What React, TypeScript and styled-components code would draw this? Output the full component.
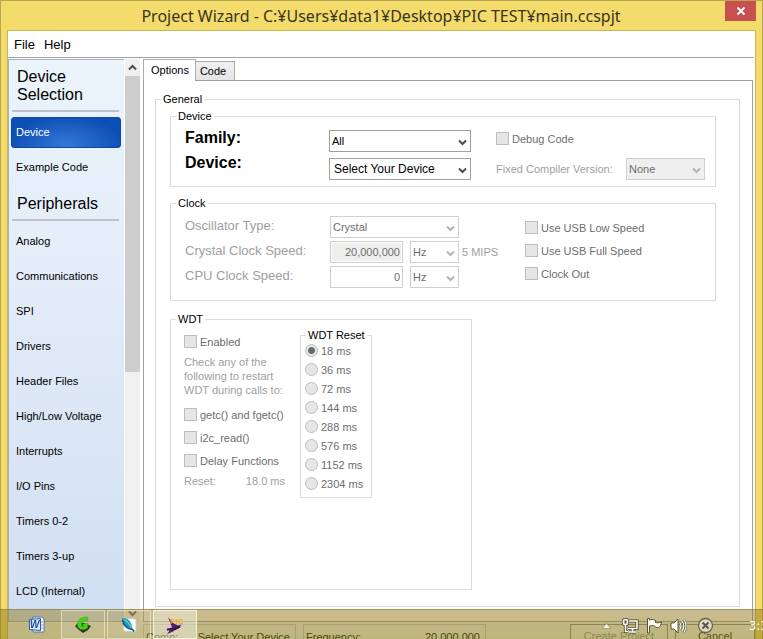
import React, { ReactNode } from "react";
import styled, { createGlobalStyle, css } from "styled-components";

const GlobalStyle = createGlobalStyle`
  *, *::before, *::after { box-sizing: border-box; }
  html, body { margin: 0; height: 100%; overflow: hidden; }
  body, button, input, select {
    font-family: "Liberation Sans", Arial, sans-serif;
    font-size: 11px;
    line-height: 14px;
    color: #000;
  }
`;

/* ---------- window frame ---------- */

const Frame = styled.div`
  display: flex;
  flex-direction: column;
  height: 100vh;
  overflow: hidden;
  padding: 0 6px;
  background: #f3db6c;
  border: 1px solid #bba64e;
  border-bottom: 0;
`;

const TitleBar = styled.header`
  display: flex;
  flex: none;
  align-items: flex-start;
  height: 29px;
`;

const Title = styled.h1`
  flex: 1;
  margin: 0;
  padding-left: 30px;
  text-align: center;
  font-family: "Noto Sans", sans-serif;
  font-size: 16px;
  font-weight: 400;
  line-height: 31px;
  color: #3a3420;
  white-space: nowrap;
`;

const CloseButton = styled.button`
  display: flex;
  align-items: center;
  justify-content: center;
  width: 31px;
  height: 20px;
  padding: 0;
  border: 0;
  background: #c75050;
`;

const Client = styled.div`
  display: flex;
  flex: none;
  flex-direction: column;
  background: #fff;
  border: 1px solid #c9b558;
`;

const MenuBar = styled.nav`
  display: flex;
  gap: 9px;
  height: 27px;
  margin-right: 1px;
  padding: 2px 0 0 6px;
  border-bottom: 1px solid #a0a0a0;
`;

const MenuItem = styled.button`
  padding: 0;
  border: 0;
  background: none;
  font-size: 13px;
`;

const Main = styled.div`
  display: grid;
  grid-template-columns: 116px 17px 1fr;
  gap: 0 1px;
  margin-top: 1px;
`;

/* ---------- sidebar ---------- */

const Sidebar = styled.nav`
  padding: 0 3px 0 2px;
  border: solid #a3b0bf;
  border-width: 1px 0 1px 1px;
  background: linear-gradient(#ebf4fb, #e3ecf8 40%, #d0dff2);
`;

const SectionHeading = styled.h2`
  margin: 0 2px 5px 1px;
  padding: 8px 0 6px 5px;
  border-bottom: 2px solid #bcc2c8;
  font-size: 16px;
  font-weight: 400;
  line-height: 18px;
`;

const NavItem = styled.button<{ $active?: boolean }>`
  display: block;
  width: 100%;
  height: 31px;
  margin-bottom: 4px;
  padding: 0 4px 1px;
  border: 1px solid transparent;
  border-radius: 3px;
  background: none;
  text-align: left;
  white-space: nowrap;
  ${(p) =>
    p.$active &&
    css`
      border-color: #0f49a0;
      background: radial-gradient(ellipse at 50% 90%, #3576d8, #0e4fb6 75%);
      color: #fff;
    `}
`;

const ScrollBar = styled.div`
  display: flex;
  flex-direction: column;
  align-items: stretch;
  margin-right: 2px;
  background: #f0f0f0;
`;

const ScrollArrow = styled.button`
  display: flex;
  align-items: center;
  justify-content: center;
  height: 17px;
  padding: 0;
  border: 0;
  background: none;
`;

const ScrollTrack = styled.div`
  flex: 1;
`;

const ScrollThumb = styled.div`
  height: 56%;
  background: #cdcdcd;
`;

/* ---------- tabs ---------- */

const TabArea = styled.div`
  display: flex;
  flex-direction: column;
  margin: 0 2px 0 0;
`;

const TabList = styled.div`
  display: flex;
  align-items: flex-end;
  height: 21px;
`;

const Tab = styled.button<{ $active?: boolean }>`
  height: ${(p) => (p.$active ? 21 : 19)}px;
  padding: ${(p) => (p.$active ? "0 6px 1px 7px" : "0 8px 0 4px")};
  border: 1px solid #acacac;
  border-bottom: 0;
  border-left-width: ${(p) => (p.$active ? 1 : 0)}px;
  background: ${(p) => (p.$active ? "#fff" : "linear-gradient(#f0f0f0, #e5e5e5)")};
`;

const TabPanel = styled.div`
  padding: 12px 12px 14px 11px;
  border: 1px solid #a0a0a0;
  border-top: 0;
  background: linear-gradient(90deg, #fff 51px, #a0a0a0 51px) top / 100% 1px no-repeat;
`;

/* ---------- form pieces ---------- */

const Group = styled.fieldset<{ $gap?: number; $width?: number }>`
  min-width: 0;
  width: ${(p) => (p.$width ? `${p.$width}px` : "auto")};
  margin: ${(p) => p.$gap ?? 0}px 0 0;
  padding: 0;
  border: 1px solid #dcdcdc;
`;

const Legend = styled.legend`
  margin-left: 5px;
  padding: 0 2px;
  line-height: 14px;
  white-space: nowrap;
`;

const GroupBody = styled.div<{ $pad: string }>`
  padding: ${(p) => p.$pad};
`;

const Row = styled.div<{ $gap?: number; $align?: string }>`
  display: flex;
  gap: ${(p) => p.$gap ?? 0}px;
  align-items: ${(p) => p.$align ?? "flex-start"};
`;

const Stack = styled.div<{ $gap?: number; $width?: number; $top?: number; $left?: number }>`
  display: flex;
  flex: none;
  flex-direction: column;
  gap: ${(p) => p.$gap ?? 0}px;
  width: ${(p) => (p.$width ? `${p.$width}px` : "auto")};
  margin: ${(p) => p.$top ?? 0}px 0 0 ${(p) => p.$left ?? 0}px;
`;

const BigLabel = styled.label`
  font-size: 16px;
  font-weight: 700;
  line-height: 25px;
`;

const ClockGrid = styled.div`
  display: grid;
  grid-template-columns: 145px 73px 56px 35px;
  grid-auto-rows: 22px;
  gap: 3px 0;
  align-items: center;
`;

const ClockLabel = styled.label`
  padding-bottom: 2px;
  font-size: 13px;
  line-height: 18px;
  color: #a0a0a0;
`;

const OscillatorCell = styled.div`
  grid-column: 2 / -1;
`;

const Dim = styled.span`
  color: #a0a0a0;
  white-space: nowrap;
`;

const MipsText = styled(Dim)`
  padding-left: 3px;
`;

const DimLabel = styled.label`
  width: 130px;
  color: #a0a0a0;
  white-space: nowrap;
`;

const DimParagraph = styled.p`
  margin: 0;
  color: #a0a0a0;
`;

const SelectBox = styled.span<{ $width: number; $left?: number }>`
  position: relative;
  display: block;
  width: ${(p) => p.$width}px;
  height: 22px;
  margin-left: ${(p) => p.$left ?? 0}px;

  svg {
    position: absolute;
    top: 9px;
    right: 4px;
    pointer-events: none;
  }
`;

const SelectControl = styled.select<{ $filled?: boolean; $large?: boolean }>`
  appearance: none;
  width: 100%;
  height: 100%;
  padding: 0 14px 1px ${(p) => (p.$large ? 4 : 2)}px;
  border: 1px solid #a0a0a0;
  border-radius: 0;
  background: #fff;
  font-size: ${(p) => (p.$large ? 12 : 11)}px;

  &:disabled {
    border-color: #cfcfcf;
    background: ${(p) => (p.$filled ? "#efefef" : "#fff")};
    color: #6d6d6d;
    opacity: 1;
  }
`;

const NumberBox = styled.input`
  width: 73px;
  height: 22px;
  padding: 0 2px;
  border: 1px solid #cfcfcf;
  border-radius: 0;
  outline: 0;
  background: #fff;
  box-shadow: inset 0 0 0 1px #fff;
  color: #6d6d6d;
  text-align: right;

  &:read-only {
    background: #efefef;
  }
`;

const CheckLabel = styled.label`
  display: flex;
  align-items: center;
  gap: 3px;
  height: 13px;
  color: #6d6d6d;
  white-space: nowrap;
`;

const CheckInput = styled.input`
  appearance: none;
  flex: none;
  width: 13px;
  height: 13px;
  margin: 0;
  border: 1px solid #bcbcbc;
  background: #e6e6e6;

  &[type="radio"] {
    border-radius: 50%;
  }
  &[type="radio"]:checked {
    background: radial-gradient(circle, #6a6a6a 3px, #e6e6e6 4px);
  }
`;

const ResetRow = styled.div`
  display: flex;
  justify-content: space-between;
  color: #a0a0a0;
`;

/* ---------- status strip ---------- */

const StatusBar = styled.footer`
  display: flex;
  gap: 7px;
  padding: 2px 0 12px 135px;
  background: #f4f4f4;
`;

const StatusCell = styled.div<{ $width: number }>`
  display: flex;
  justify-content: space-between;
  width: ${(p) => p.$width}px;
  height: 28px;
  padding: 5px 5px 0 2px;
  border: 1px solid #c8c8c8;
  white-space: nowrap;
`;

const StatusButton = styled.button<{ $first?: boolean }>`
  width: ${(p) => (p.$first ? 98 : 80)}px;
  height: 28px;
  margin-left: ${(p) => (p.$first ? "auto" : "0")};
  padding: 0 0 4px;
  border: 1px solid #8a8a8a;
  background: #f4f4f4;
  color: ${(p) => (p.$first ? "#8d8d8d" : "#222")};
`;

/* ---------- task bar ---------- */

const TaskBar = styled.div`
  position: fixed;
  right: 0;
  bottom: 0;
  left: 0;
  display: flex;
  align-items: stretch;
  justify-content: space-between;
  height: 30px;
  border-top: 1px solid rgba(120, 108, 50, 0.45);
  background: linear-gradient(rgba(150, 120, 32, 0.5), rgba(140, 126, 20, 0.53));
  overflow: hidden;
`;

const TaskButtons = styled.div`
  display: flex;
  gap: 2px;
  padding-left: 15px;
`;

const TaskButton = styled.button<{ $open?: boolean; $active?: boolean }>`
  display: flex;
  align-items: center;
  justify-content: center;
  width: 44px;
  padding: 0;
  border: 1px solid ${(p) => (p.$active ? "#f4f1dc" : p.$open ? "rgba(245, 242, 215, 0.6)" : "transparent")};
  background: ${(p) => (p.$active ? "rgba(255, 255, 255, 0.38)" : p.$open ? "rgba(255, 255, 255, 0.1)" : "none")};
`;

const Tray = styled.div`
  display: flex;
  flex: none;
  align-items: center;
  padding-top: 2px;
  margin-right: -5px;
`;

const TrayButton = styled.button<{ $width: number }>`
  display: flex;
  align-items: center;
  justify-content: center;
  width: ${(p) => p.$width}px;
  height: 20px;
  padding: 0;
  border: 0;
  background: none;
`;

const ClockText = styled.time`
  padding-left: 28px;
  font-family: "DejaVu Sans", Verdana, sans-serif;
  font-size: 12px;
  color: #fff;
`;

/* ---------- small components ---------- */

function Chevron({ dim, up }: { dim?: boolean; up?: boolean }) {
  return (
    <svg width="9" height="7" viewBox="0 0 9 7" aria-hidden="true">
      <path
        d={up ? "M1 5.5 4.5 2 8 5.5" : "M1 1.5 4.5 5 8 1.5"}
        fill="none"
        stroke={dim ? "#b4b4b4" : "#4c4c4c"}
        strokeWidth="2"
      />
    </svg>
  );
}

interface SelectProps {
  id?: string;
  label?: string;
  value: string;
  width: number;
  left?: number;
  disabled?: boolean;
  filled?: boolean;
  large?: boolean;
}

function Select({ id, label, value, width, left, disabled, filled, large }: SelectProps) {
  return (
    <SelectBox $width={width} $left={left}>
      <SelectControl
        id={id}
        aria-label={label}
        disabled={disabled}
        $filled={filled}
        $large={large}
        defaultValue={value}
      >
        <option>{value}</option>
      </SelectControl>
      <Chevron dim={disabled} />
    </SelectBox>
  );
}

function Check({ children }: { children: ReactNode }) {
  return (
    <CheckLabel>
      <CheckInput type="checkbox" disabled />
      {children}
    </CheckLabel>
  );
}

const peripherals = [
  "Analog",
  "Communications",
  "SPI",
  "Drivers",
  "Header Files",
  "High/Low Voltage",
  "Interrupts",
  "I/O Pins",
  "Timers 0-2",
  "Timers 3-up",
  "LCD (Internal)",
];

const resetTimes = ["18 ms", "36 ms", "72 ms", "144 ms", "288 ms", "576 ms", "1152 ms", "2304 ms"];

function DeviceGroup() {
  return (
    <Group>
      <Legend>Device</Legend>
      <GroupBody $pad="0 10px 6px 14px">
        <Row>
          <Stack $width={144} $top={2}>
            <BigLabel htmlFor="family">Family:</BigLabel>
            <BigLabel htmlFor="device">Device:</BigLabel>
          </Stack>
          <Stack $gap={6} $top={7}>
            <Select id="family" value="All" width={142} />
            <Select id="device" value="Select Your Device" width={142} large />
          </Stack>
          <Stack $gap={13} $top={9} $left={25}>
            <Check>Debug Code</Check>
            <Row $align="center">
              <DimLabel htmlFor="compiler">Fixed Compiler Version:</DimLabel>
              <Select id="compiler" value="None" width={79} disabled filled />
            </Row>
          </Stack>
        </Row>
      </GroupBody>
    </Group>
  );
}

function ClockGroup() {
  return (
    <Group $gap={9}>
      <Legend>Clock</Legend>
      <GroupBody $pad="6px 10px 12px 14px">
        <Row>
          <ClockGrid>
            <ClockLabel htmlFor="oscillator">Oscillator Type:</ClockLabel>
            <OscillatorCell>
              <Select id="oscillator" value="Crystal" width={129} disabled />
            </OscillatorCell>
            <ClockLabel htmlFor="crystal">Crystal Clock Speed:</ClockLabel>
            <NumberBox id="crystal" defaultValue="20,000,000" readOnly />
            <Select label="Crystal clock unit" value="Hz" width={49} left={7} disabled />
            <MipsText>5 MIPS</MipsText>
            <ClockLabel htmlFor="cpu">CPU Clock Speed:</ClockLabel>
            <NumberBox id="cpu" defaultValue="0" />
            <Select label="CPU clock unit" value="Hz" width={49} left={7} disabled />
          </ClockGrid>
          <Stack $gap={10} $top={5} $left={31}>
            <Check>Use USB Low Speed</Check>
            <Check>Use USB Full Speed</Check>
            <Check>Clock Out</Check>
          </Stack>
        </Row>
      </GroupBody>
    </Group>
  );
}

function WdtGroup() {
  return (
    <Group $gap={11} $width={302}>
      <Legend>WDT</Legend>
      <GroupBody $pad="2px 10px 91px 13px">
        <Row $gap={15}>
          <Stack $gap={7} $width={101} $top={7}>
            <Check>Enabled</Check>
            <DimParagraph>
              Check any of the
              <br />
              following to restart
              <br />
              WDT during calls to:
            </DimParagraph>
            <Stack $gap={10} $top={4}>
              <Check>getc() and fgetc()</Check>
              <Check>i2c_read()</Check>
              <Check>Delay Functions</Check>
            </Stack>
            <ResetRow>
              <span>Reset:</span>
              <span>18.0 ms</span>
            </ResetRow>
          </Stack>
          <Group $width={72}>
            <Legend>WDT Reset</Legend>
            <GroupBody $pad="2px 0 7px 4px">
              <Stack $gap={6}>
                {resetTimes.map((time, i) => (
                  <CheckLabel key={time}>
                    <CheckInput type="radio" name="wdt-reset" disabled defaultChecked={i === 0} />
                    {time}
                  </CheckLabel>
                ))}
              </Stack>
            </GroupBody>
          </Group>
        </Row>
      </GroupBody>
    </Group>
  );
}

const IconText = styled.text`
  font-family: "Liberation Sans", Arial, sans-serif;
  font-weight: 700;
`;

function WordIcon() {
  return (
    <svg width="18" height="18" viewBox="0 0 18 18" aria-hidden="true">
      <path d="M5 1h9l2 2v13H5z" fill="#f5f8fd" stroke="#5577ad" />
      <path d="M13 6h2M13 9h2M13 12h2" stroke="#88a5d2" />
      <path d="M1.500 3.500 12.500 2.500v12L1.500 13.500z" fill="#dce9fb" stroke="#2e5aa8" />
      <IconText x="2" y="12" fontSize="10" fontStyle="italic" fill="#1d4c9f">
        W
      </IconText>
    </svg>
  );
}

function GreenIcon() {
  return (
    <svg width="18" height="18" viewBox="0 0 18 18" aria-hidden="true">
      <path d="M1 10 5 6l5 1 7 3-3 4-5 3-4-3z" fill="#263a2a" />
      <path
        d="M14 1.500C9.500 0 3.500 3 3.500 8.500c0 5 5.500 6.500 10 3.500l.5-4.500-5 .5-.5 2h2c-1.500 1.300-3 .5-3-1.500 0-3 3-4.500 6-3.500z"
        fill="#49d219"
        stroke="#2f9d14"
        strokeWidth=".5"
      />
    </svg>
  );
}

function FeatherIcon() {
  return (
    <svg width="16" height="16" viewBox="0 0 16 16" aria-hidden="true">
      <rect x="2.500" y="1.500" width="12.500" height="13" rx="2" fill="#f7fafb" stroke="#c8cdc4" />
      <path d="M1 1c6-.5 10 4 10.500 11.500C6 12 1.500 8 1 1z" fill="#1c97bd" />
      <path d="M1.500 3c.5 5 4.500 9 10 9.500L13 14.500" fill="none" stroke="#174c91" strokeWidth="1.500" />
      <path d="M3 2.500c4 2 6 5 7.500 8.500" fill="none" stroke="#6fd6a6" strokeWidth="1.300" />
    </svg>
  );
}

function PicIcon() {
  return (
    <svg width="20" height="20" viewBox="0 0 20 20" aria-hidden="true">
      <path d="M3 2 8 8l5 2.500 4-1-4 4-6 3.500L2 19l3-4-4-.5 6-2z" fill="#54206f" />
      <path d="M2 14.500c4 .5 8-.5 13-3" fill="none" stroke="#3c1454" strokeWidth="2" />
      <IconText x="5" y="9" fontSize="8" fill="#f0ab25">
        PIC
      </IconText>
    </svg>
  );
}

function NetworkIcon() {
  return (
    <svg width="17" height="16" viewBox="0 0 17 16" aria-hidden="true">
      <g stroke="#4a4526" strokeWidth="3.200" fill="none">
        <path d="M7 3h8v7.500H6M10.500 11v3M7 14h7M3.500 6v7.500H6" />
        <rect x="1.500" y="1.500" width="4" height="5" rx="1.500" />
      </g>
      <g stroke="#fff" strokeWidth="1.600" fill="none">
        <path d="M7 3h8v7.500H6M10.500 11v3M7 14h7M3.500 6v7.500H6" />
        <rect x="1.500" y="1.500" width="4" height="5" rx="1.500" fill="#777044" />
      </g>
    </svg>
  );
}

function FlagIcon() {
  return (
    <svg width="17" height="16" viewBox="0 0 17 16" aria-hidden="true">
      <path
        d="M1.500.5h2V2c2.500-.8 4-.5 6 .5v2c2 .5 3.500.5 6-.5-.5 3-1.500 5-3 5.500-2 .5-3-.5-4-1.500-2-.5-3.500-.5-5 0v7h-2z"
        fill="#fff"
        stroke="#4a4526"
        strokeWidth=".9"
      />
    </svg>
  );
}

function SpeakerIcon() {
  return (
    <svg width="17" height="16" viewBox="0 0 17 16" aria-hidden="true">
      <path d="M1 5h3l4-4v14l-4-4H1z" fill="#fff" stroke="#4a4526" strokeWidth=".9" />
      <path d="M10 5q2 3 0 6M12 3q3.500 5 0 10M14 1.500q4 6.500 0 13" fill="none" stroke="#4a4526" strokeWidth="2" />
      <path d="M10 5q2 3 0 6M12 3q3.500 5 0 10M14 1.500q4 6.500 0 13" fill="none" stroke="#fff" strokeWidth="1.200" />
    </svg>
  );
}

function CircleXIcon() {
  return (
    <svg width="17" height="17" viewBox="0 0 17 17" aria-hidden="true">
      <circle cx="8.500" cy="8.500" r="7" fill="#dedac4" stroke="#67624f" strokeWidth="1.300" />
      <path d="m5.500 5.500 6 6m0-6-6 6" stroke="#5b574c" strokeWidth="2" />
    </svg>
  );
}

export default function App() {
  return (
    <>
      <GlobalStyle />
      <Frame>
        <TitleBar>
          <Title>Project Wizard - C:¥Users¥data1¥Desktop¥PIC TEST¥main.ccspjt</Title>
          <CloseButton aria-label="Close">
            <svg width="10" height="10" viewBox="0 0 10 10" aria-hidden="true">
              <path d="m1.500 1.500 7 7m0-7-7 7" stroke="#fff" strokeWidth="1.900" />
            </svg>
          </CloseButton>
        </TitleBar>
        <Client>
          <MenuBar>
            <MenuItem>File</MenuItem>
            <MenuItem>Help</MenuItem>
          </MenuBar>
          <Main>
            <Sidebar aria-label="Sections">
              <SectionHeading>Device Selection</SectionHeading>
              <NavItem $active>Device</NavItem>
              <NavItem>Example Code</NavItem>
              <SectionHeading>Peripherals</SectionHeading>
              {peripherals.map((name) => (
                <NavItem key={name}>{name}</NavItem>
              ))}
            </Sidebar>
            <ScrollBar>
              <ScrollArrow aria-label="Scroll up">
                <Chevron up />
              </ScrollArrow>
              <ScrollTrack>
                <ScrollThumb />
              </ScrollTrack>
              <ScrollArrow aria-label="Scroll down">
                <Chevron />
              </ScrollArrow>
            </ScrollBar>
            <TabArea>
              <TabList role="tablist">
                <Tab role="tab" aria-selected $active>
                  Options
                </Tab>
                <Tab role="tab">Code</Tab>
              </TabList>
              <TabPanel role="tabpanel">
                <Group>
                  <Legend>General</Legend>
                  <GroupBody $pad="3px 23px 16px 14px">
                    <DeviceGroup />
                    <ClockGroup />
                    <WdtGroup />
                  </GroupBody>
                </Group>
              </TabPanel>
            </TabArea>
          </Main>
          <StatusBar>
            <StatusCell $width={153}>
              <span>Comp:</span>
              <span>Select Your Device</span>
            </StatusCell>
            <StatusCell $width={183}>
              <span>Frequency:</span>
              <span>20,000,000</span>
            </StatusCell>
            <StatusButton $first disabled>
              Create Project
            </StatusButton>
            <StatusButton>Cancel</StatusButton>
          </StatusBar>
        </Client>
      </Frame>
      <TaskBar>
        <TaskButtons>
          <TaskButton aria-label="Word">
            <WordIcon />
          </TaskButton>
          <TaskButton $open aria-label="Editor">
            <GreenIcon />
          </TaskButton>
          <TaskButton $open aria-label="Notes">
            <FeatherIcon />
          </TaskButton>
          <TaskButton $active aria-label="PIC">
            <PicIcon />
          </TaskButton>
        </TaskButtons>
        <Tray>
          <TrayButton $width={24} aria-label="Show hidden icons">
            <svg width="9" height="6" viewBox="0 0 9 6" aria-hidden="true">
              <path d="M.5 5.500 4.500.5l4 5z" fill="#fff" stroke="#6b6537" strokeWidth=".5" />
            </svg>
          </TrayButton>
          <TrayButton $width={24} aria-label="Network">
            <NetworkIcon />
          </TrayButton>
          <TrayButton $width={24} aria-label="Action centre">
            <FlagIcon />
          </TrayButton>
          <TrayButton $width={24} aria-label="Volume">
            <SpeakerIcon />
          </TrayButton>
          <TrayButton $width={30} aria-label="Status">
            <CircleXIcon />
          </TrayButton>
          <ClockText>3:3</ClockText>
        </Tray>
      </TaskBar>
    </>
  );
}
